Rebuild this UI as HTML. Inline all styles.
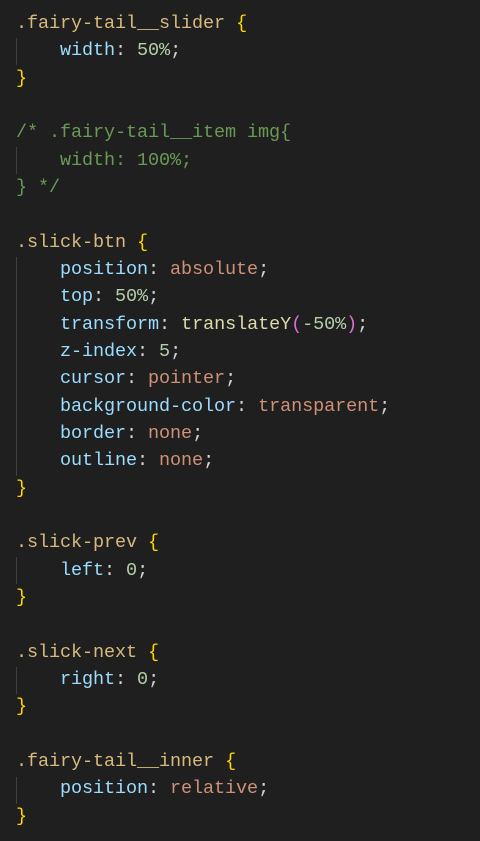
<!DOCTYPE html>
<html><head><style>
body{margin:0;background:#1f1f1f;width:480px;height:841px;overflow:hidden}
pre{margin:0;position:absolute;left:16px;top:10px;font-family:"Liberation Mono",monospace;font-size:18.5px;line-height:27.33px;color:#d4d4d4;letter-spacing:-0.1px}
.s{color:#d7ba7d}.b{color:#ffd700}.p{color:#9cdcfe}.n{color:#b5cea8}.v{color:#ce9178}.c{color:#6a9955}.f{color:#dcdcaa}.q{color:#da70d6}
.g{position:absolute;left:16px;width:1px;background:#404040}
</style></head><body>
<div class="g" style="top:38px;height:27px"></div>
<div class="g" style="top:147px;height:27px"></div>
<div class="g" style="top:257px;height:219px"></div>
<div class="g" style="top:557px;height:27px"></div>
<div class="g" style="top:667px;height:27px"></div>
<div class="g" style="top:777px;height:27px"></div>
<pre><span class="s">.fairy-tail__slider</span> <span class="b">{</span>
    <span class="p">width</span>: <span class="n">50%</span>;
<span class="b">}</span>

<span class="c">/* .fairy-tail__item img{
    width: 100%;
} */</span>

<span class="s">.slick-btn</span> <span class="b">{</span>
    <span class="p">position</span>: <span class="v">absolute</span>;
    <span class="p">top</span>: <span class="n">50%</span>;
    <span class="p">transform</span>: <span class="f">translateY</span><span class="q">(</span><span class="n">-50%</span><span class="q">)</span>;
    <span class="p">z-index</span>: <span class="n">5</span>;
    <span class="p">cursor</span>: <span class="v">pointer</span>;
    <span class="p">background-color</span>: <span class="v">transparent</span>;
    <span class="p">border</span>: <span class="v">none</span>;
    <span class="p">outline</span>: <span class="v">none</span>;
<span class="b">}</span>

<span class="s">.slick-prev</span> <span class="b">{</span>
    <span class="p">left</span>: <span class="n">0</span>;
<span class="b">}</span>

<span class="s">.slick-next</span> <span class="b">{</span>
    <span class="p">right</span>: <span class="n">0</span>;
<span class="b">}</span>

<span class="s">.fairy-tail__inner</span> <span class="b">{</span>
    <span class="p">position</span>: <span class="v">relative</span>;
<span class="b">}</span></pre>
</body></html>
